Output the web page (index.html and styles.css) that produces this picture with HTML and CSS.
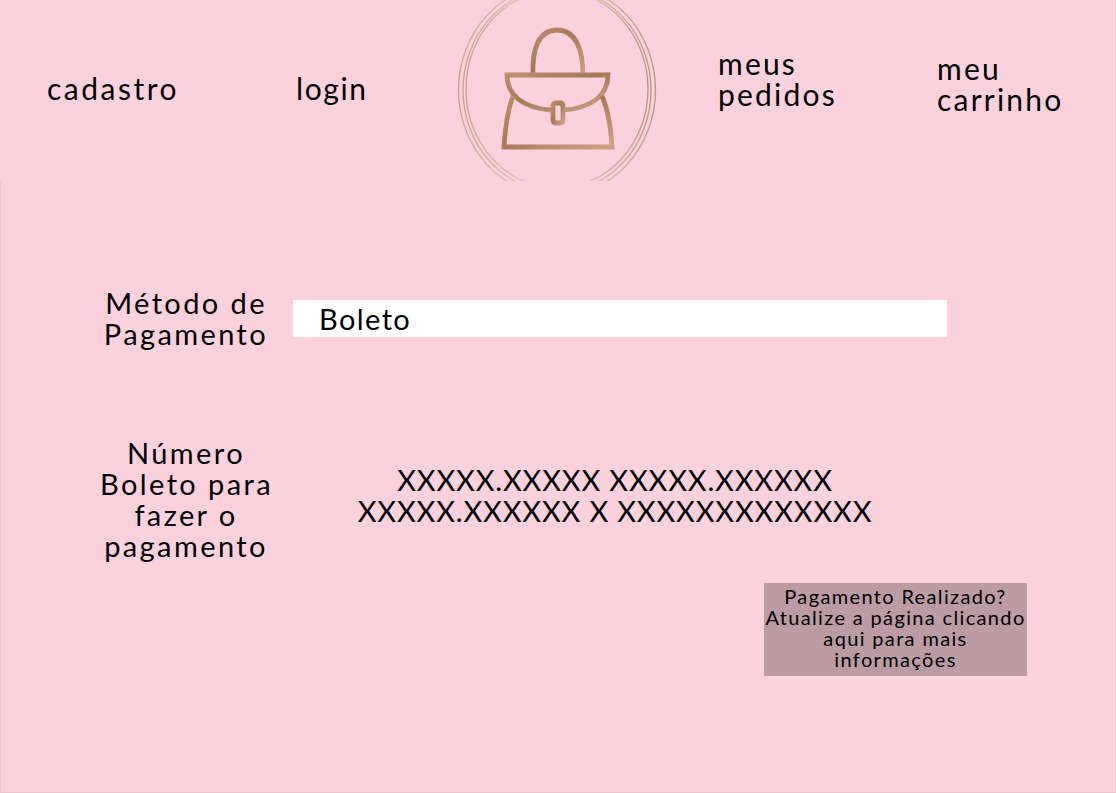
FILE: index.html
```html
<!DOCTYPE html>
<html lang="pt-BR">
<head>
    <meta charset="UTF-8">
    <meta name="viewport" content="width=device-width, initial-scale=1.0">
    <title>Pagamento</title>
    <link rel="stylesheet" href="styles.css">
</head>
<body>
    <header class="topo">
        <a class="link-topo link-cadastro" href="#">cadastro</a>
        <a class="link-topo link-login" href="#">login</a>
        <svg class="logo" viewBox="0 0 200 181" width="200" height="181" aria-label="logo">
            <defs>
                <linearGradient id="ouro" x1="0" y1="0" x2="1" y2="1">
                    <stop offset="0" stop-color="#bd8f6c"/>
                    <stop offset="0.45" stop-color="#a67a58"/>
                    <stop offset="1" stop-color="#cfa285"/>
                </linearGradient>
                <linearGradient id="aro" x1="0" y1="0" x2="1" y2="0">
                    <stop offset="0" stop-color="#c9a28e"/>
                    <stop offset="0.5" stop-color="#ecd0c4"/>
                    <stop offset="1" stop-color="#ba9583"/>
                </linearGradient>
            </defs>
            <g fill="none" stroke="url(#aro)" stroke-width="1.3">
                <ellipse cx="100" cy="90" rx="98.5" ry="106"/>
                <ellipse cx="100" cy="90" rx="94" ry="102"/>
                <ellipse cx="100" cy="89" rx="91" ry="99"/>
            </g>
            <g fill="none" stroke="url(#ouro)" stroke-width="4.8">
                <path d="M76 75 C75 50 81 30 100 30 C119 30 126 50 126 75"/>
                <path d="M94 110 C66 108 50 95 50 75 H151 C151 95 135 108 107 110"/>
                <path d="M56 96 C50 112 48 130 47 147 H155 C154 130 152 112 145 96"/>
                <rect x="96" y="103" width="10" height="20" rx="2.5"/>
            </g>
        </svg>
        <a class="link-topo link-pedidos" href="#">meus<br>pedidos</a>
        <a class="link-topo link-carrinho" href="#">meu<br>carrinho</a>
    </header>

    <main class="conteudo">
        <div class="linha linha-metodo">
            <p class="rotulo">Método de<br>Pagamento</p>
            <div class="campo">Boleto</div>
        </div>
        <div class="linha linha-numero">
            <p class="rotulo">Número<br>Boleto para<br>fazer o<br>pagamento</p>
            <p class="numero-boleto">XXXXX.XXXXX XXXXX.XXXXXX<br>XXXXX.XXXXXX X XXXXXXXXXXXXX</p>
        </div>
        <div class="acoes">
            <button class="botao-atualizar">Pagamento Realizado?<br>Atualize a página clicando<br>aqui para mais<br>informações</button>
        </div>
    </main>
</body>
</html>
```
FILE: styles.css
```css
* {
    box-sizing: border-box;
}
body {
    font-family: 'Lato', 'Noto Sans', sans-serif;
    margin: 0;
    padding: 0;
    height: 793px;
    display: flex;
    flex-direction: column;
    background-color: #fcd1de;
    color: #000;
    border-right: 1px solid #eec3d0;
    border-bottom: 1px solid #eec3d0;
    overflow: hidden;
}
.topo {
    display: grid;
    grid-template-columns: 249px 161px 200px 61px 219px 1fr;
    padding-left: 47px;
    height: 181px;
    overflow: hidden;
}
.link-topo {
    color: #000;
    text-decoration: none;
    font-size: 30px;
    line-height: 31px;
    letter-spacing: 2.2px;
}
.link-cadastro,
.link-login {
    padding-top: 73px;
}
.link-cadastro {
    letter-spacing: 2.5px;
}
.link-login {
    letter-spacing: 1.6px;
}
.link-pedidos {
    grid-column: 5;
    padding-top: 48px;
}
.link-carrinho {
    grid-column: 6;
    padding-top: 53px;
}
.logo {
    display: block;
}
.conteudo {
    flex: 1;
    padding-top: 105px;
    border-left: 1px solid #eec3d0;
}
.linha {
    display: grid;
    grid-template-columns: 271px 654px;
    column-gap: 21px;
}
.rotulo {
    margin: 0;
    text-align: center;
    font-size: 29px;
    line-height: 31px;
    letter-spacing: 2.4px;
    padding-left: 99px;
    white-space: nowrap;
}
.linha-metodo {
    align-items: center;
    height: 64px;
}
.campo {
    background-color: #fff;
    height: 37px;
    line-height: 38px;
    font-size: 29px;
    letter-spacing: 1.4px;
    padding-left: 26px;
}
.linha-numero {
    margin-top: 87px;
}
.numero-boleto {
    margin: 0;
    padding-top: 27px;
    padding-right: 10px;
    text-align: center;
    font-size: 29px;
    line-height: 31px;
    letter-spacing: 0.8px;
}
.acoes {
    display: flex;
    justify-content: flex-end;
    padding-right: 88px;
    margin-top: 22px;
}
.botao-atualizar {
    width: 263px;
    height: 93px;
    padding: 0 0 4px;
    border: none;
    background-color: #bc9ca4;
    color: #000;
    font-family: inherit;
    font-size: 20px;
    line-height: 21px;
    letter-spacing: 1.35px;
    cursor: pointer;
}
```
